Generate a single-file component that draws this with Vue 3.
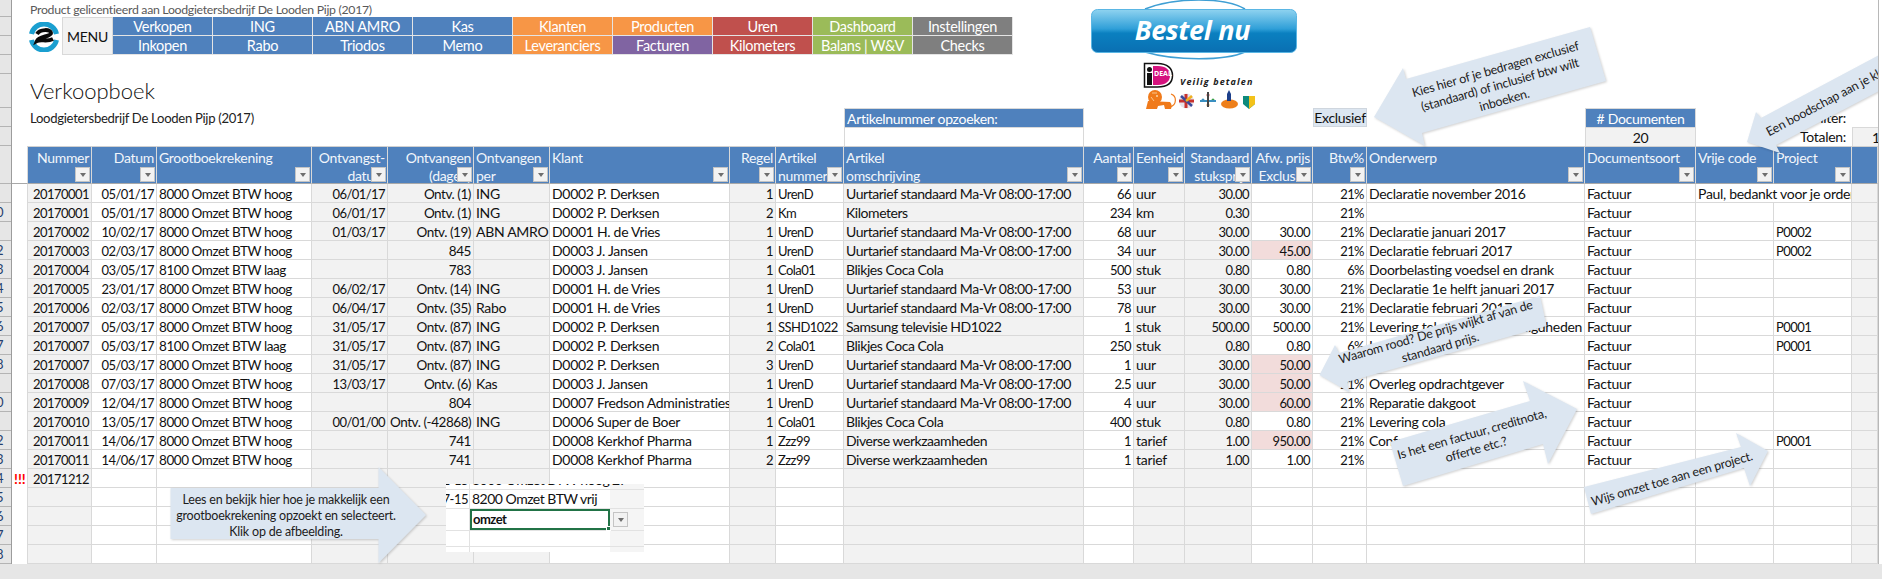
<template>
  <div class="app">
    <div class="sheet">
      <div class="rowheads">
        <div v-for="(h, i) in topHeads" :key="'t' + i" class="rowhead" :style="{ height: h + 'px' }"></div>
        <div v-for="(n, i) in rowDigits" :key="'r' + i" class="rowhead num"><span>{{ n }}</span></div>
      </div>

      <div class="gutter">
        <div class="gutter-top"></div>
        <div v-for="n in 20" :key="n" class="gutter-row">{{ n === 16 ? '!!!' : '' }}</div>
      </div>

      <div class="content">
        <div class="top">
          <div class="license">Product gelicentieerd aan Loodgietersbedrijf De Looden Pijp (2017)</div>
          <div class="menu-row">
            <div class="logo">
              <svg width="30" height="30" viewBox="0 0 30 30">
                <path d="M2.500 12 A12.800 12.800 0 0 1 27.500 12" fill="none" stroke="#1a9fd0" stroke-width="5" />
                <path d="M2.500 18 A12.800 12.800 0 0 0 27.500 18" fill="none" stroke="#1a9fd0" stroke-width="5" />
                <path d="M8 12 C11 7 22 7 22 11 C22 15 10 14 8 19 C12 17 18 20 24 17" fill="none" stroke="#0a0a0a" stroke-width="4" />
              </svg>
            </div>
            <div class="menu-btn">MENU</div>
            <div class="menu">
              <div v-for="m in menu" :key="m.t" class="menu-item" :class="m.c">{{ m.t }}</div>
            </div>
          </div>
          <div class="title">Verkoopboek</div>
          <div class="subtitle">Loodgietersbedrijf De Looden Pijp (2017)</div>
          <div class="lookup-head">Artikelnummer opzoeken:</div>
          <div class="lookup-box"></div>
          <div class="excl">Exclusief</div>
          <div class="docs-head"># Documenten</div>
          <div class="docs-val">20</div>
          <div class="lbl lbl-filter">Filter:</div>
          <div class="lbl lbl-total">Totalen:</div>
          <div class="total-val">1</div>
        </div>

        <div class="table">
          <div v-for="(c, i) in cols" :key="'h' + i" class="th" :class="{ right: c.r, first: i === 0 }">
            <div v-for="l in c.h" :key="l" class="th-line">{{ l }}</div>
            <span v-if="c.h.length" class="filter"><i></i></span>
          </div>
          <template v-for="(row, ri) in cells" :key="ri">
            <div
              v-for="c in row"
              :key="c.key"
              class="td"
              :class="[c.fit, { right: c.r, grey: c.g, pink: c.pink, first: c.first }]"
              :style="c.span ? { gridColumn: 'span ' + c.span } : null"
            >{{ c.text }}</div>
          </template>
        </div>
      </div>
    </div>
    <div class="bottom"></div>

    <div class="pic">
      <div class="pic-inner">
        <div class="pic-row"><span class="p-a">2-15</span><span class="p-b">8000 Omzet BTW hoog</span><span class="p-c">27</span></div>
        <div class="pic-row"><span class="p-a">7-15</span><span class="p-b">8200 Omzet BTW vrij</span><span class="p-c"></span></div>
        <div class="pic-row sel"><span class="p-a"></span><span class="p-b cur">omzet</span><span class="p-c"><em class="filter"><i></i></em></span></div>
        <div class="pic-row low"><span class="p-a"></span><span class="p-b"></span><span class="p-c"></span></div>
        <div class="pic-row"><span class="p-a"></span><span class="p-b"></span><span class="p-c"></span></div>
      </div>
    </div>

    <svg class="overlay" width="1878" height="579" viewBox="0 0 1878 579">
      <defs>
        <linearGradient id="btn" x1="0" y1="0" x2="0" y2="1">
          <stop offset="0" stop-color="#8fd3f0" />
          <stop offset="0.45" stop-color="#2f9fd8" />
          <stop offset="0.55" stop-color="#0a80c0" />
          <stop offset="1" stop-color="#0a6fb2" />
        </linearGradient>
      </defs>

      <!-- bestel knop -->
      <path d="M1145 9 C1175 -3 1225 -3 1245 9" fill="none" stroke="#3f9fd4" stroke-width="1.5" />
      <path d="M1145 52 C1175 61 1225 61 1245 52" fill="none" stroke="#3f9fd4" stroke-width="1.5" />
      <rect x="1091.5" y="9.5" width="205" height="43" rx="6" fill="url(#btn)" stroke="#5ab6e4" />
      <text x="1192.5" y="40" class="bestel" text-anchor="middle">Bestel nu</text>

      <!-- ideal -->
      <path d="M1144.5 63.5 h13 c10 0 15 5 15 12 s-5 11.500 -15 11.500 h-13 z" fill="#fff" stroke="#111" stroke-width="1.500" />
      <path d="M1153 66 h5 c8 0 12 4 12 9.500 s-4 9.500 -12 9.500 h-5 z" fill="#d5127e" />
      <rect x="1147" y="73" width="5" height="12" fill="#111" />
      <circle cx="1149.500" cy="69.500" r="2.500" fill="#111" />
      <text x="1154" y="76" class="deal">DEAL</text>
      <text x="1180" y="85" class="veilig">Veilig betalen</text>

      <!-- banken -->
      <g fill="#f07a1a">
        <circle cx="1155" cy="97" r="7" />
        <path d="M1146 109 L1148 101 L1170 102 C1172 104 1172 107 1171 109 L1165 109 L1164 105 L1158 106 L1157 109 Z" />
        <circle cx="1157" cy="96" r="1" fill="#fbd9a8" />
        <path d="M1152 93 l5 0 M1151 97 l3 4" stroke="#fbd9a8" stroke-width="0.8" />
      </g>
      <path d="M1170 107 C1177 105 1177 96 1171 94" fill="none" stroke="#f07a1a" stroke-width="1.200" />
      <circle cx="1186.500" cy="101" r="7.500" fill="#e8e2ea" />
      <path d="M1179 101 h15 M1186 94 v14" stroke="#c8322e" stroke-width="3" />
      <path d="M1181 96 l11 10" stroke="#3a4a9a" stroke-width="2.500" />
      <path d="M1192 96 l-6 5" stroke="#f0b020" stroke-width="2.500" />
      <g fill="#3a8fc0">
        <circle cx="1208" cy="95" r="1.500" fill="#d23a3a" />
        <circle cx="1203" cy="100" r="1.500" />
        <circle cx="1213" cy="100" r="1.500" fill="#3aa04a" />
        <circle cx="1208" cy="105" r="1.500" fill="#e0902a" />
        <rect x="1200" y="100" width="16" height="2" />
        <rect x="1207" y="92" width="2" height="15" fill="#444" />
      </g>
      <ellipse cx="1229.500" cy="104" rx="8.500" ry="4.500" fill="#ee7f1a" />
      <path d="M1229 90 l2 4 v7 h-4 v-7 z" fill="#1d3f8a" />
      <path d="M1243 96 h12 v8 l-6 5 l-6 -5 z" fill="#0e8a7c" />
      <path d="M1249 96 h6 v8 l-6 5 z" fill="#f3c21a" />

      <!-- pijlen -->
      <polygon v-for="a in arrows" :key="a.id" :points="a.pts" class="arrow" />
      <g v-for="a in arrows" :key="'t' + a.id" :transform="'translate(' + a.x + ' ' + a.y + ') rotate(' + a.rot + ')'">
        <text
          v-for="(l, i) in a.lines"
          :key="i"
          class="arrow-text"
          :text-anchor="a.anchor || 'middle'"
          :y="(i - (a.lines.length - 1) / 2) * 16 + 4"
        >{{ l }}</text>
      </g>
    </svg>
  </div>
</template>

<script setup>
const topHeads = [17, 19, 19, 19, 34, 19, 19, 38]
const rowDigits = ['', '0', '', '2', '3', '4', '5', '6', '7', '8', '', '0', '', '2', '3', '4', '5', '6', '7', '8']

const menu = [
  { t: 'Verkopen', c: 'blue' }, { t: 'ING', c: 'blue' }, { t: 'ABN AMRO', c: 'blue' }, { t: 'Kas', c: 'blue' },
  { t: 'Klanten', c: 'orange' }, { t: 'Producten', c: 'orange' }, { t: 'Uren', c: 'red' }, { t: 'Dashboard', c: 'green' }, { t: 'Instellingen', c: 'gray' },
  { t: 'Inkopen', c: 'blue' }, { t: 'Rabo', c: 'blue' }, { t: 'Triodos', c: 'blue' }, { t: 'Memo', c: 'blue' },
  { t: 'Leveranciers', c: 'orange' }, { t: 'Facturen', c: 'purple' }, { t: 'Kilometers', c: 'red' }, { t: 'Balans | W&V', c: 'green' }, { t: 'Checks', c: 'gray' }
]

// fit: numbers are set tighter, Lato's digits are wider than the sheet's font
const cols = [
  { h: ['Nummer'], r: 1, g: 1, fit: 'tight' },
  { h: ['Datum'], r: 1, fit: 'tight' },
  { h: ['Grootboekrekening'], fit: 'mid' },
  { h: ['Ontvangst-', 'datum'], r: 1, g: 1, fit: 'tight' },
  { h: ['Ontvangen', '(dagen)'], r: 1, g: 1, fit: 'mid' },
  { h: ['Ontvangen', 'per'], g: 1 },
  { h: ['Klant'] },
  { h: ['Regel'], r: 1, g: 1, fit: 'tight' },
  { h: ['Artikel', 'nummer'], fit: 'tight' },
  { h: ['Artikel', 'omschrijving'], g: 1, fit: 'soft' },
  { h: ['Aantal'], r: 1, fit: 'tight' },
  { h: ['Eenheid'], g: 1 },
  { h: ['Standaard', 'stuksprijs'], r: 1, g: 1, fit: 'tight' },
  { h: ['Afw. prijs', 'Exclusief'], r: 1, fit: 'tight' },
  { h: ['Btw%'], r: 1, fit: 'tight' },
  { h: ['Onderwerp'] },
  { h: ['Documentsoort'] },
  { h: ['Vrije code'] },
  { h: ['Project'], fit: 'tight' },
  { h: [], g: 1 }
]

const H = '8000 Omzet BTW hoog'
const L = '8100 Omzet BTW laag'
const U = 'Uurtarief standaard Ma-Vr 08:00-17:00'
const B = 'Blikjes Coca Cola'
const D = 'Diverse werkzaamheden'
const P = 'D0002 P. Derksen'
const V = 'D0001 H. de Vries'
const J = 'D0003 J. Jansen'
const K = 'D0008 Kerkhof Pharma'

// '*' = afwijkende prijs (rood), '>' = samengevoegd met de cel ervoor
const rows = [
  ['20170001', '05/01/17', H, '06/01/17', 'Ontv. (1)', 'ING', P, '1', 'UrenD', U, '66', 'uur', '30.00', '', '21%', 'Declaratie november 2016', 'Factuur', 'Paul, bedankt voor je order en tot ziens', '>', ''],
  ['20170001', '05/01/17', H, '06/01/17', 'Ontv. (1)', 'ING', P, '2', 'Km', 'Kilometers', '234', 'km', '0.30', '', '21%', '', 'Factuur', '', '', ''],
  ['20170002', '10/02/17', H, '01/03/17', 'Ontv. (19)', 'ABN AMRO', V, '1', 'UrenD', U, '68', 'uur', '30.00', '30.00', '21%', 'Declaratie januari 2017', 'Factuur', '', 'P0002', ''],
  ['20170003', '02/03/17', H, '', '845', '', J, '1', 'UrenD', U, '34', 'uur', '30.00', '*45.00', '21%', 'Declaratie februari 2017', 'Factuur', '', 'P0002', ''],
  ['20170004', '03/05/17', L, '', '783', '', J, '1', 'Cola01', B, '500', 'stuk', '0.80', '0.80', '6%', 'Doorbelasting voedsel en drank', 'Factuur', '', '', ''],
  ['20170005', '23/01/17', H, '06/02/17', 'Ontv. (14)', 'ING', V, '1', 'UrenD', U, '53', 'uur', '30.00', '30.00', '21%', 'Declaratie 1e helft januari 2017', 'Factuur', '', '', ''],
  ['20170006', '02/03/17', H, '06/04/17', 'Ontv. (35)', 'Rabo', V, '1', 'UrenD', U, '78', 'uur', '30.00', '30.00', '21%', 'Declaratie februari 2017', 'Factuur', '', '', ''],
  ['20170007', '05/03/17', H, '31/05/17', 'Ontv. (87)', 'ING', P, '1', 'SSHD1022', 'Samsung televisie HD1022', '1', 'stuk', '500.00', '500.00', '21%', 'Levering televisie en benodigdheden', 'Factuur', '', 'P0001', ''],
  ['20170007', '05/03/17', L, '31/05/17', 'Ontv. (87)', 'ING', P, '2', 'Cola01', B, '250', 'stuk', '0.80', '0.80', '6%', 'Levering cola', 'Factuur', '', 'P0001', ''],
  ['20170007', '05/03/17', H, '31/05/17', 'Ontv. (87)', 'ING', P, '3', 'UrenD', U, '1', 'uur', '30.00', '*50.00', '21%', '', 'Factuur', '', '', ''],
  ['20170008', '07/03/17', H, '13/03/17', 'Ontv. (6)', 'Kas', J, '1', 'UrenD', U, '2.5', 'uur', '30.00', '*50.00', '21%', 'Overleg opdrachtgever', 'Factuur', '', '', ''],
  ['20170009', '12/04/17', H, '', '804', '', 'D0007 Fredson Administraties', '1', 'UrenD', U, '4', 'uur', '30.00', '*60.00', '21%', 'Reparatie dakgoot', 'Factuur', '', '', ''],
  ['20170010', '13/05/17', H, '00/01/00', 'Ontv. (-42868)', 'ING', 'D0006 Super de Boer', '1', 'Cola01', B, '400', 'stuk', '0.80', '0.80', '21%', 'Levering cola', 'Factuur', '', '', ''],
  ['20170011', '14/06/17', H, '', '741', '', K, '1', 'Zzz99', D, '1', 'tarief', '1.00', '*950.00', '21%', 'Conform offerte', 'Factuur', '', 'P0001', ''],
  ['20170011', '14/06/17', H, '', '741', '', K, '2', 'Zzz99', D, '1', 'tarief', '1.00', '1.00', '21%', '', 'Factuur', '', '', ''],
  ['20171212'],
  [], [], [], []
]

const cells = rows.map((row, ri) => {
  const out = []
  cols.forEach((c, ci) => {
    const raw = row[ci] || ''
    if (raw === '>') return
    const pink = raw.startsWith('*')
    out.push({
      key: ri + '-' + ci,
      text: pink ? raw.slice(1) : raw,
      pink,
      r: c.r,
      g: c.g,
      fit: c.fit,
      first: ci === 0,
      span: row[ci + 1] === '>' ? 2 : 0
    })
  })
  return out
})

const arrows = [
  {
    id: 'incl',
    pts: '1374,117 1403,68 1406,79 1590,27 1606,81 1422,133 1425,146',
    x: 1500, y: 85, rot: -16,
    lines: ['Kies hier of je bedragen exclusief', '(standaard) of inclusief btw wilt', 'inboeken.']
  },
  {
    id: 'msg',
    pts: '1747,142 1756,112 1761,118 1900,44 1900,80 1776,145 1780,153',
    x: 1767, y: 133, rot: -28, anchor: 'start',
    lines: ['Een boodschap aan je klant']
  },
  {
    id: 'rood',
    pts: '1319.5,375 1335,345 1339,353 1540,296 1546.5,326 1347,382 1349,392',
    x: 1438, y: 340, rot: -16,
    lines: ['Waarom rood? De prijs wijkt af van de', 'standaard prijs.']
  },
  {
    id: 'soort',
    pts: '1577,409 1523,381 1530,401 1390,442 1403,486 1543,444 1548,464',
    x: 1474, y: 442, rot: -16,
    lines: ['Is het een factuur, creditnota,', 'offerte etc.?']
  },
  {
    id: 'proj',
    pts: '1768,451 1736,433 1741,447 1584,487 1591,514 1744,468 1750,486',
    x: 1672, y: 479, rot: -16,
    lines: ['Wijs omzet toe aan een project.']
  },
  {
    id: 'lees',
    pts: '426,515 378.5,467 378.5,488 170.5,488 170.5,539 378.5,539 378.5,563',
    x: 286, y: 516, rot: 0,
    lines: ['Lees en bekijk hier hoe je makkelijk een', 'grootboekrekening opzoekt en selecteert.', 'Klik op de afbeelding.']
  }
]
</script>

<style>
html, body {
  margin: 0;
  background: #fff;
}
</style>

<style scoped>
.app {
  position: relative;
  width: 1882px;
  height: 579px;
  overflow: hidden;
  background: #fff;
  font-family: Lato, "Open Sans", sans-serif;
  font-size: 14px;
  letter-spacing: -0.3px;
  color: #111;
}

.sheet {
  display: flex;
  height: 564px;
}

.rowheads {
  width: 12px;
  flex: none;
  background: #e6e6e6;
  border-right: 1px solid #9c9c9c;
  box-sizing: border-box;
}

.rowhead {
  box-sizing: border-box;
  border-bottom: 1px solid #b4b4b4;
  overflow: hidden;
}

.rowhead.num {
  height: 19px;
  line-height: 19px;
  font-size: 13px;
  color: #25406e;
}

.rowhead.num span {
  margin-left: -4px;
}

.gutter {
  width: 15px;
  flex: none;
}

.gutter-top {
  height: 184px;
  box-sizing: border-box;
  border-bottom: 1px solid #a8a8a8;
}

.gutter-row {
  height: 19px;
  line-height: 19px;
  padding-left: 2px;
  color: #f00;
  font-weight: 700;
  font-size: 14px;
  letter-spacing: 0;
}

.content {
  width: 1851px;
  flex: none;
  border-right: 1px solid #b8b8b8;
  box-sizing: content-box;
}

.top,
.table {
  display: grid;
  grid-template-columns: 65px 65px 155px 76px 86px 76px 180px 46px 68px 240px 50px 51px 67px 61px 54px 218px 111px 78px 78px 26px;
}

.top {
  grid-template-rows: 17px 38px 53px 19px 19px;
}

.license {
  grid-column: 1 / -1;
  grid-row: 1;
  padding-left: 3px;
  line-height: 19px;
  font-size: 12.3px;
  color: #595959;
}

.menu-row {
  grid-column: 1 / -1;
  grid-row: 2;
  display: flex;
  align-items: stretch;
  height: 38px;
}

.logo {
  width: 35px;
  padding: 5px 0 0 2px;
  box-sizing: border-box;
}

.menu-btn {
  width: 51px;
  box-sizing: border-box;
  background: #f2f2f2;
  border: 1px solid #d9d9d9;
  display: flex;
  align-items: center;
  justify-content: center;
  font-size: 14px;
}

.menu {
  display: grid;
  grid-template-columns: repeat(9, 100px);
  grid-template-rows: 19px 19px;
}

.menu-item {
  box-sizing: border-box;
  border-right: 1px solid #e4e4e4;
  border-bottom: 1px solid #e4e4e4;
  color: #fff;
  text-align: center;
  line-height: 20px;
  font-size: 14.5px;
}

.blue { background: #4f81bd; }
.orange { background: #f79646; }
.red { background: #c0504d; }
.green { background: #9bbb59; }
.gray { background: #7f7f7f; }
.purple { background: #8064a2; }

.title {
  grid-column: 1 / 8;
  grid-row: 3;
  padding: 21px 0 0 3px;
  font-size: 22px;
  font-weight: 300;
  line-height: 30px;
  letter-spacing: 0;
  color: #111;
}

.subtitle {
  grid-column: 1 / 8;
  grid-row: 4;
  padding-left: 3px;
  line-height: 21px;
  font-size: 13.1px;
  color: #222;
}

.lookup-head {
  grid-column: 10;
  grid-row: 4;
  background: #4f81bd;
  color: #fff;
  line-height: 19px;
  padding-left: 2px;
  border: 1px solid #d9d9d9;
  border-bottom: 0;
}

.lookup-box {
  grid-column: 10;
  grid-row: 5;
  border: 1px solid #d9d9d9;
  border-bottom: 0;
}

.excl {
  grid-column: 15;
  grid-row: 4;
  background: #dce6f1;
  border: 1px solid #cfd6de;
  box-sizing: border-box;
  line-height: 17px;
  text-align: center;
}

.docs-head {
  grid-column: 17;
  grid-row: 4;
  background: #4f81bd;
  color: #fff;
  text-align: center;
  line-height: 19px;
  border: 1px solid #d9d9d9;
  border-bottom: 0;
}

.docs-val {
  grid-column: 17;
  grid-row: 5;
  background: #f2f2f2;
  text-align: center;
  line-height: 19px;
  border: 1px solid #d9d9d9;
  border-bottom: 0;
}

.lbl {
  grid-column: 19;
  text-align: right;
  line-height: 19px;
  padding-right: 6px;
}

.lbl-filter { grid-row: 4; }
.lbl-total { grid-row: 5; }

.total-val {
  grid-column: 20;
  grid-row: 5;
  background: #f2f2f2;
  line-height: 19px;
  padding-left: 19px;
  border-top: 1px solid #d9d9d9;
  border-left: 1px solid #d9d9d9;
  overflow: hidden;
}

.table {
  grid-template-rows: 38px;
  grid-auto-rows: 19px;
  width: 1851px;
}

.th {
  position: relative;
  box-sizing: border-box;
  height: 38px;
  background: #4f81bd;
  color: #f2f6fb;
  border-top: 1px solid #d0d0d0;
  border-right: 1px solid #d9d9d9;
  border-bottom: 1px solid #a9a9a9;
  padding: 1px 2px 0;
  overflow: hidden;
  white-space: nowrap;
}

.th-line {
  height: 18px;
  line-height: 19px;
}

.th.right,
.td.right {
  text-align: right;
}

.first {
  border-left: 1px solid #d9d9d9;
}

.filter {
  position: absolute;
  right: 1px;
  bottom: 1px;
  width: 15px;
  height: 15px;
  box-sizing: border-box;
  background: #f2f2f2;
  border: 1px solid #c4c4c4;
  display: flex;
  align-items: center;
  justify-content: center;
}

.filter i {
  width: 0;
  height: 0;
  border-left: 3.5px solid transparent;
  border-right: 3.5px solid transparent;
  border-top: 4px solid #6e6e6e;
}

.td {
  box-sizing: border-box;
  height: 19px;
  line-height: 20px;
  padding: 0 2px;
  background: #fff;
  border-right: 1px solid #d9d9d9;
  border-bottom: 1px solid #d9d9d9;
  white-space: nowrap;
  overflow: hidden;
}

.td.tight {
  font-size: 13px;
  letter-spacing: -0.55px;
}

.td.mid {
  font-size: 13.5px;
  letter-spacing: -0.45px;
}

.td.soft {
  letter-spacing: -0.45px;
}

.td.grey { background: #f2f2f2; }
.td.pink { background: #f2dcdb; }

.bottom {
  height: 15px;
  background: #e6e6e6;
}

.pic {
  position: absolute;
  left: 446px;
  top: 484px;
  width: 198px;
  height: 68px;
  overflow: hidden;
  background: #fff;
  letter-spacing: -0.5px;
}

.pic-inner {
  margin-top: -13px;
}

.pic-row {
  display: flex;
  height: 18px;
  line-height: 18px;
  border-bottom: 1px solid #e2e2e2;
}

.pic-row.sel {
  height: 21px;
  line-height: 19px;
}

.pic-row.low {
  height: 15px;
}

.p-a {
  display: flex;
  justify-content: flex-end;
  width: 24px;
  flex: none;
  border-right: 1px solid #e2e2e2;
  box-sizing: border-box;
  padding-right: 1px;
  white-space: nowrap;
  overflow: hidden;
  font-size: 13px;
}

.p-b {
  position: relative;
  width: 140px;
  flex: none;
  box-sizing: border-box;
  padding-left: 2px;
  white-space: nowrap;
}

.p-b.cur {
  border: 2px solid #217346;
  font-weight: 700;
  padding-left: 1px;
  line-height: 17px;
  font-size: 13px;
}

.p-b.cur::after {
  content: "";
  position: absolute;
  right: -3px;
  bottom: -3px;
  width: 5px;
  height: 5px;
  background: #217346;
  border: 1px solid #fff;
  box-sizing: border-box;
}

.p-c {
  position: relative;
  width: 34px;
  flex: none;
  background: #f5f5f5;
  text-align: left;
  padding-left: 2px;
}

.p-c .filter {
  left: 3px;
  right: auto;
  top: 3px;
  bottom: auto;
}

.overlay {
  position: absolute;
  left: 0;
  top: 0;
  pointer-events: none;
}

.arrow {
  fill: #dce6f1;
  filter: drop-shadow(1px 1px 1px rgba(0, 0, 0, 0.18));
}

.arrow-text {
  font-family: Lato, "Open Sans", sans-serif;
  font-size: 12.5px;
  letter-spacing: -0.2px;
  fill: #1c1c1c;
}

.bestel {
  font-family: "Open Sans", sans-serif;
  font-style: italic;
  font-weight: 700;
  font-size: 27px;
  letter-spacing: -0.3px;
  fill: #fff;
}

.deal {
  font-family: "Open Sans", sans-serif;
  font-weight: 700;
  font-size: 7px;
  letter-spacing: 0;
  fill: #fff;
}

.veilig {
  font-family: "Open Sans", sans-serif;
  font-style: italic;
  font-weight: 700;
  font-size: 9px;
  letter-spacing: 1.1px;
  fill: #1a1a1a;
}
</style>
